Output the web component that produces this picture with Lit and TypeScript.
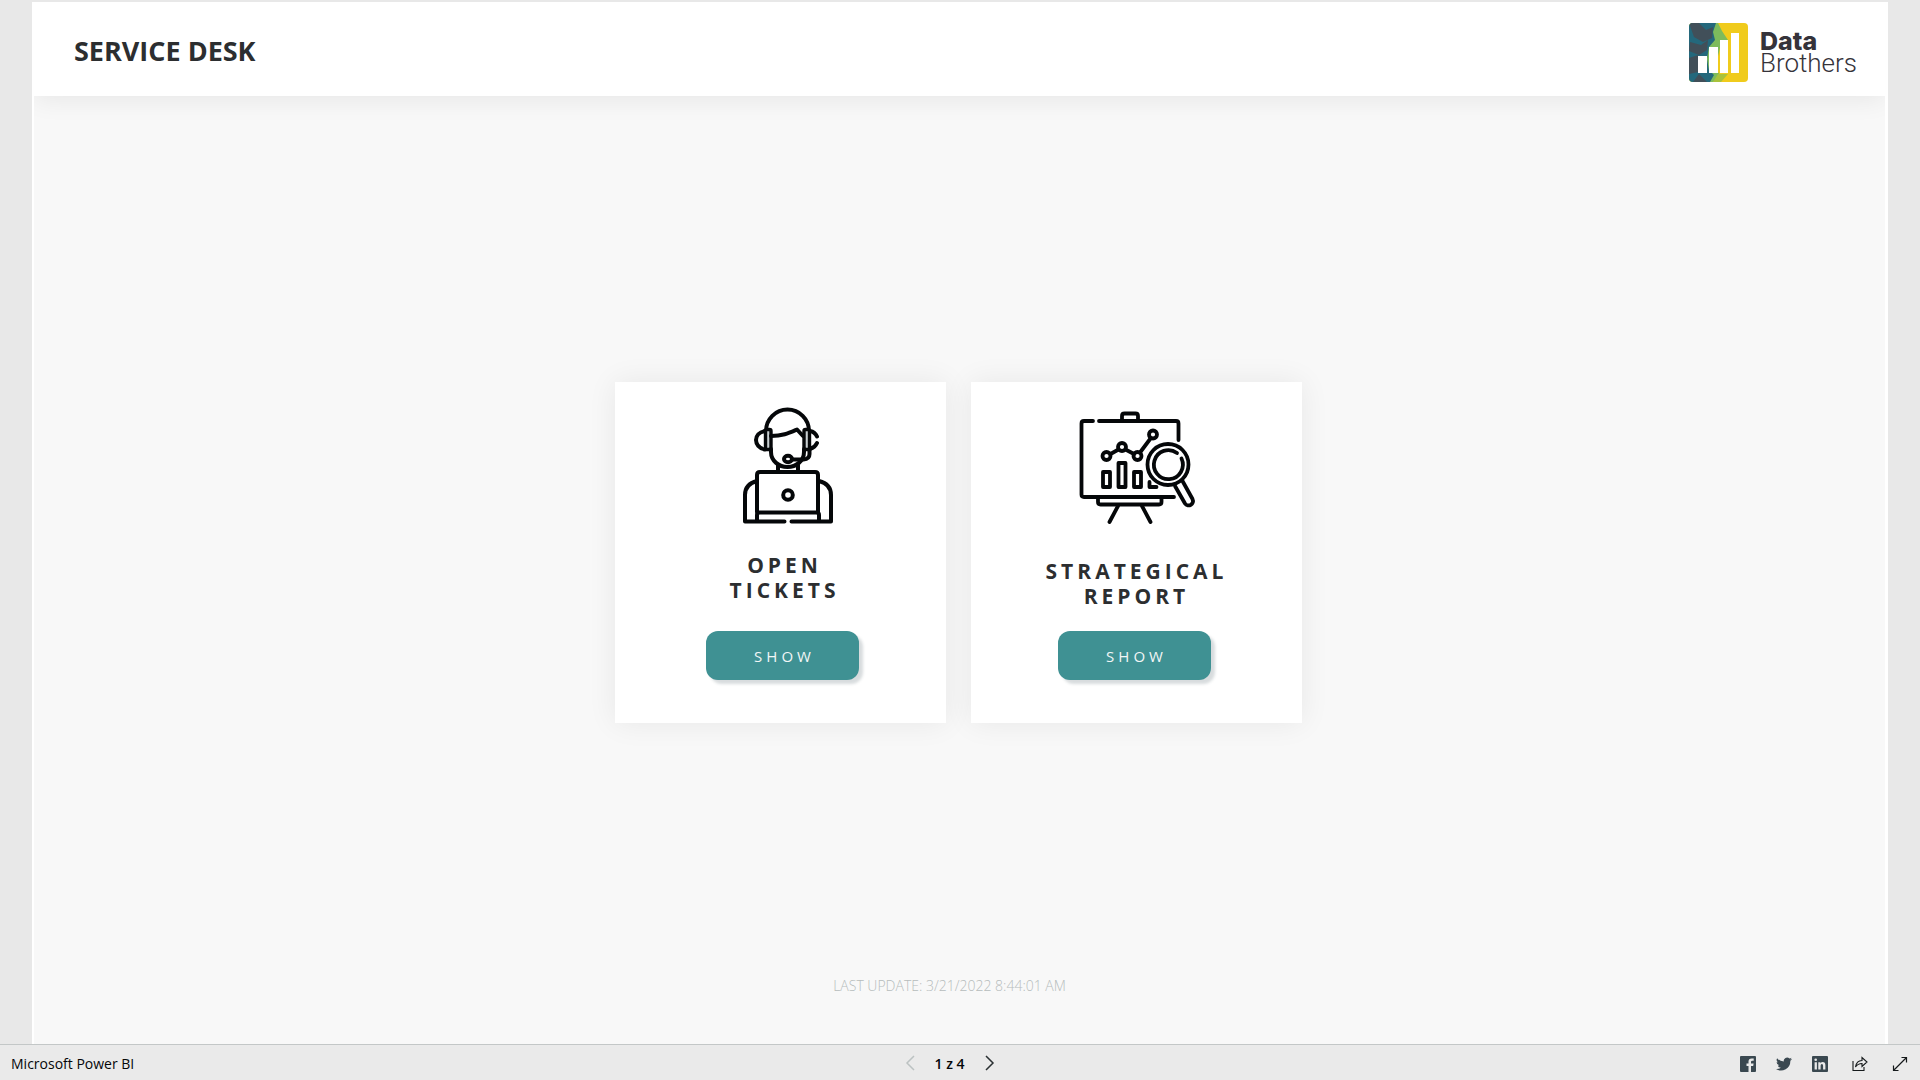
import { LitElement, html, css, svg } from "lit";
import { customElement, property, state } from "lit/decorators.js";

const agentIcon = html`
  <svg class="art" viewBox="0 0 128 128" width="128" height="128" aria-hidden="true">
    <g transform="translate(1 2)" fill="none" stroke="#050709" stroke-width="4" stroke-linecap="round" stroke-linejoin="round">
      <path d="M46 31V27a21.500 21.500 0 0 1 43 0V31" />
      <rect x="45.500" y="25.500" width="5.500" height="20" rx="1.500" fill="#c9d0d2" stroke-width="3.400" />
      <rect x="84" y="25.500" width="5.500" height="20" rx="1.500" fill="#c9d0d2" stroke-width="3.400" />
      <path d="M45 27C33 29 33 43 45 45.500M90 27q5 1 7 5.500M97 39q-2 4.500-7 6" />
      <path d="M51 32c12 0 18-3 26-6.500l6 6.500" />
      <path d="M51 45v3c0 9 8 15 16.500 15S84 57 84 48v-3" />
      <path d="M89.500 46v4q0 5-6 5.500H72" />
      <ellipse cx="68" cy="55" rx="4" ry="3.200" />
      <path d="M58 61v7M78 61v7" />
      <path d="M37 108V71q0-3 3-3h55q3 0 3 3v37" />
      <path d="M37 77q-12 3-12 14v26.500h39.500M99 77q12 3 12 14v26.500H71.500" />
      <path d="M37 117v-6q0-2.500 2.500-2.500h57q2.500 0 2.500 2.500v6" />
      <circle cx="68" cy="91" r="4.800" />
    </g>
  </svg>
`;

const boardIcon = html`
  <svg class="art" viewBox="0 0 128 134" width="128" height="134" aria-hidden="true">
    <g fill="none" stroke="#050709" stroke-width="3.800" stroke-linecap="round" stroke-linejoin="round">
      <path d="M22 19H13q-2.500 0-2.500 2.500v71q0 2.500 2.500 2.500h90M28 19h77q2.500 0 2.500 2.500V38" />
      <path d="M51 18v-4q0-2.500 2.500-2.500h11q2.500 0 2.500 2.500v4" />
      <path d="M27 96v4q0 2.500 2.500 2.500h58.500q2.500 0 2.500-2.500v-4" />
      <path d="M47 104 38.500 120M71 104l8.500 16" />
      <circle cx="35.500" cy="54" r="4" />
      <circle cx="51" cy="45" r="4" />
      <circle cx="66.500" cy="54" r="4" />
      <circle cx="82" cy="32.500" r="4" />
      <path d="m39.500 52 8-4.500M54.500 47.500l8.500 4.500M69 50.500l10.500-14" />
      <rect x="32" y="70" width="7" height="15" />
      <rect x="47.500" y="61" width="7" height="24" />
      <rect x="63" y="70" width="7" height="15" />
      <path d="M78.500 80v5h7" />
      <circle cx="97" cy="62.500" r="20.500" />
      <path d="M106 51a14.500 14.500 0 1 0 4.500 5.500" />
      <path d="m104 84 10 17.500c3 4.500 10 .5 7.500-4.500L111.500 79" />
    </g>
  </svg>
`;

@customElement("tile-card")
export class TileCard extends LitElement {
  @property() name = "";
  @property({ attribute: false }) lines: string[] = [];
  @property({ attribute: false }) icon: unknown = null;

  static styles = css`
    :host {
      display: flex;
      flex-direction: column;
      align-items: center;
      box-sizing: border-box;
      min-height: 341px;
      padding: 20px 0 43px;
      background: #fff;
      box-shadow: 0 0 28px rgba(0, 0, 0, 0.07);
    }
    .art {
      display: block;
    }
    .heading {
      margin: 23px 0 0;
      padding-left: 4px;
      font-size: 21px;
      line-height: 25px;
      font-weight: 700;
      letter-spacing: 4px;
      text-align: center;
      color: #2c2e30;
    }
    .line {
      display: block;
    }
    .show {
      width: 153px;
      height: 49px;
      margin-top: auto;
      padding: 0 0 0 4px;
      border: 0;
      border-radius: 12px;
      background: #3f9193;
      color: #f2f6f6;
      font: inherit;
      font-size: 15px;
      letter-spacing: 4px;
      box-shadow: 4px 4px 3px rgba(40, 60, 70, 0.18);
      cursor: pointer;
    }
  `;

  render() {
    return html`
      ${this.icon}
      <h2 class="heading">${this.lines.map((l) => html`<span class="line">${l}</span>`)}</h2>
      <button class="show" type="button">SHOW</button>
    `;
  }
}

const bars = [
  [9, 33, 9, 17],
  [20, 24, 9, 26],
  [31, 17, 8, 33],
  [42, 10, 8, 40],
];

@customElement("app-root")
export class AppRoot extends LitElement {
  @state() private page = 1;
  private readonly pages = 4;

  static styles = css`
    :host {
      display: flex;
      flex-direction: column;
      min-height: 100vh;
      background: #e8e8e8;
      font-family: "Open Sans", "Noto Sans", sans-serif;
      color: #050709;
    }
    .stage {
      flex: 1;
      display: flex;
      flex-direction: column;
      margin: 2px 32px 0;
      border: solid #fff;
      border-width: 0 3px 0 2px;
      background: #f8f8f8;
    }
    .top {
      display: flex;
      align-items: center;
      justify-content: space-between;
      height: 94px;
      padding: 0 28px 0 40px;
      background: #fff;
      box-shadow: 0 4px 24px rgba(0, 0, 0, 0.07);
      clip-path: inset(0 0 -40px 0);
    }
    .title {
      margin: 0;
      padding-top: 4px;
      font-size: 27px;
      line-height: 36px;
      font-weight: 700;
      color: #2c2e30;
    }
    .brand {
      display: flex;
      align-items: center;
      gap: 12px;
      padding-top: 6px;
      font-family: Roboto, sans-serif;
      font-size: 26px;
      line-height: 22px;
      color: #35333a;
    }
    .mark {
      display: block;
    }
    .brand-name {
      display: flex;
      flex-direction: column;
    }
    .brand-name b {
      font-family: Inter, Roboto, sans-serif;
      font-size: 25px;
      font-weight: 800;
    }
    .brand-name span {
      font-weight: 300;
    }
    .main {
      flex: 1;
      display: flex;
      flex-direction: column;
      align-items: center;
      justify-content: space-between;
      padding: 286px 2px 48px 0;
    }
    .cards {
      display: grid;
      grid-template-columns: 331px 331px;
      gap: 25px;
    }
    .tickets {
      padding-left: 4px;
    }
    .report {
      padding-right: 4px;
    }
    .updated {
      margin: 0;
      padding-right: 18px;
      font-size: 14px;
      line-height: 20px;
      font-weight: 300;
      color: #b6bcbc;
    }
    .bar {
      display: grid;
      grid-template-columns: 1fr auto 1fr;
      align-items: center;
      height: 34px;
      padding: 1px 12px 0 11px;
      border-top: 1px solid #c3c7c7;
      background: #eaeaea;
      font-size: 14px;
    }
    .bar a {
      color: inherit;
      text-decoration: none;
    }
    .pager {
      display: flex;
      align-items: center;
      gap: 18px;
      padding-right: 20px;
      font-weight: 600;
    }
    .step {
      display: flex;
      padding: 0;
      border: 0;
      background: none;
      color: #2b3133;
      cursor: pointer;
    }
    .step:disabled {
      color: #bcc2c2;
      cursor: default;
    }
    .social {
      display: flex;
      align-items: center;
      justify-content: flex-end;
      gap: 20px;
      padding-top: 1px;
    }
    .social a,
    .social button {
      display: flex;
      padding: 0;
      border: 0;
      background: none;
      color: #3a4850;
    }
    .social .share {
      margin: 0 4px;
    }
  `;

  render() {
    return html`
      <div class="stage">
        <header class="top">
          <h1 class="title">SERVICE DESK</h1>
          <div class="brand">
            <svg class="mark" viewBox="0 0 59 59" width="59" height="59" aria-hidden="true">
              <defs><clipPath id="tile"><rect width="59" height="59" rx="4" /></clipPath></defs>
              <g clip-path="url(#tile)">
                <rect width="59" height="59" fill="#f0cb1c" />
                <path d="M0 0h29l4 8 6 9-7 4-3 12-3 14 6 5-8 7H0z" fill="#7dbb5c" />
                <path d="M0 0h27l-3 9 2 8-6 7-2 12 2 11 5 5-4 7H0z" fill="#24687c" />
                <path d="M0 0h10l7 7 7-3-1 11-9 4-9-5zM1 19l11 3 7-5-1 10-8 5-10-4zM0 35l9-3v17l-9 2zM10 51l8 8H4z" fill="#414f59" />
                <path d="M24 59l5-8h10l-7 8z" fill="#a9c23c" />
                ${bars.map(([x, y, w, h]) => svg`<rect x=${x} y=${y} width=${w} height=${h} fill="#fff" />`)}
              </g>
            </svg>
            <div class="brand-name"><b>Data</b><span>Brothers</span></div>
          </div>
        </header>
        <main class="main">
          <div class="cards">
            <tile-card class="tickets" .lines=${["OPEN", "TICKETS"]} .icon=${agentIcon}></tile-card>
            <tile-card class="report" .lines=${["STRATEGICAL", "REPORT"]} .icon=${boardIcon}></tile-card>
          </div>
          <p class="updated">LAST UPDATE: 3/21/2022 8:44:01 AM</p>
        </main>
      </div>
      <footer class="bar">
        <a href="#">Microsoft Power BI</a>
        <nav class="pager" aria-label="Pages">
          <button class="step" type="button" aria-label="Previous page" ?disabled=${this.page === 1} @click=${() => this.page--}>
            <svg width="12" height="16" viewBox="0 0 12 16"><path d="M10 1 3 8l7 7" fill="none" stroke="currentColor" stroke-width="1.500" /></svg>
          </button>
          <span>${this.page} z ${this.pages}</span>
          <button class="step" type="button" aria-label="Next page" ?disabled=${this.page === this.pages} @click=${() => this.page++}>
            <svg width="12" height="16" viewBox="0 0 12 16"><path d="m3 1 7 7-7 7" fill="none" stroke="currentColor" stroke-width="1.500" /></svg>
          </button>
        </nav>
        <div class="social">
          <a href="#" aria-label="Facebook">
            <svg width="16" height="16" viewBox="0 0 16 16"><rect width="16" height="16" rx="1" fill="currentColor" /><path fill="#eaeaea" d="M8.500 16V10H6.500V7.500h2V5.600q0-3.200 3.200-3.200h2v2.300h-1.500q-1.200 0-1.200 1.200v1.600h2.600L13.200 10H11v6z" /></svg>
          </a>
          <a href="#" aria-label="Twitter">
            <svg width="16" height="16" viewBox="0 0 24 24"><path fill="currentColor" d="M24 4.600a10 10 0 0 1-2.800.8 5 5 0 0 0 2.100-2.700 10 10 0 0 1-3.100 1.200 4.900 4.900 0 0 0-8.400 4.500A14 14 0 0 1 1.700 3.200a4.900 4.900 0 0 0 1.500 6.500 5 5 0 0 1-2.200-.6 4.900 4.900 0 0 0 3.900 4.900 5 5 0 0 1-2.200.1 4.900 4.900 0 0 0 4.600 3.400A10 10 0 0 1 0 19.500 14 14 0 0 0 21.500 7.100 10 10 0 0 0 24 4.600z" /></svg>
          </a>
          <a href="#" aria-label="LinkedIn">
            <svg width="16" height="16" viewBox="0 0 16 16"><rect width="16" height="16" rx="1" fill="currentColor" /><g fill="#eaeaea"><circle cx="3.700" cy="3.800" r="1.300" /><path d="M2.600 6.200h2.300v7.200H2.600zM6.300 6.200h2.200v1q.8-1.200 2.200-1.200 2.700 0 2.700 3.200v4.200h-2.300V9.700q0-1.700-1.200-1.700-1.300 0-1.300 1.700v3.700H6.300z" /></g></svg>
          </a>
          <button class="share" type="button" aria-label="Share">
            <svg width="16" height="16" viewBox="0 0 16 16" fill="none" stroke="#15191b" stroke-width="1.100"><path d="M1 5v9.500h11V11" /><path d="M3.500 11Q4.500 4.500 10 4.500V1.500L15 6l-5 4.500v-3Q6 7.500 3.500 11z" /></svg>
          </button>
          <button type="button" aria-label="Full screen">
            <svg width="16" height="16" viewBox="0 0 16 16" fill="none" stroke="#15191b" stroke-width="1.200"><path d="M1.500 14.500l13-13M9.500 1.500h5v5M1.500 9.500v5h5" /></svg>
          </button>
        </div>
      </footer>
    `;
  }
}
